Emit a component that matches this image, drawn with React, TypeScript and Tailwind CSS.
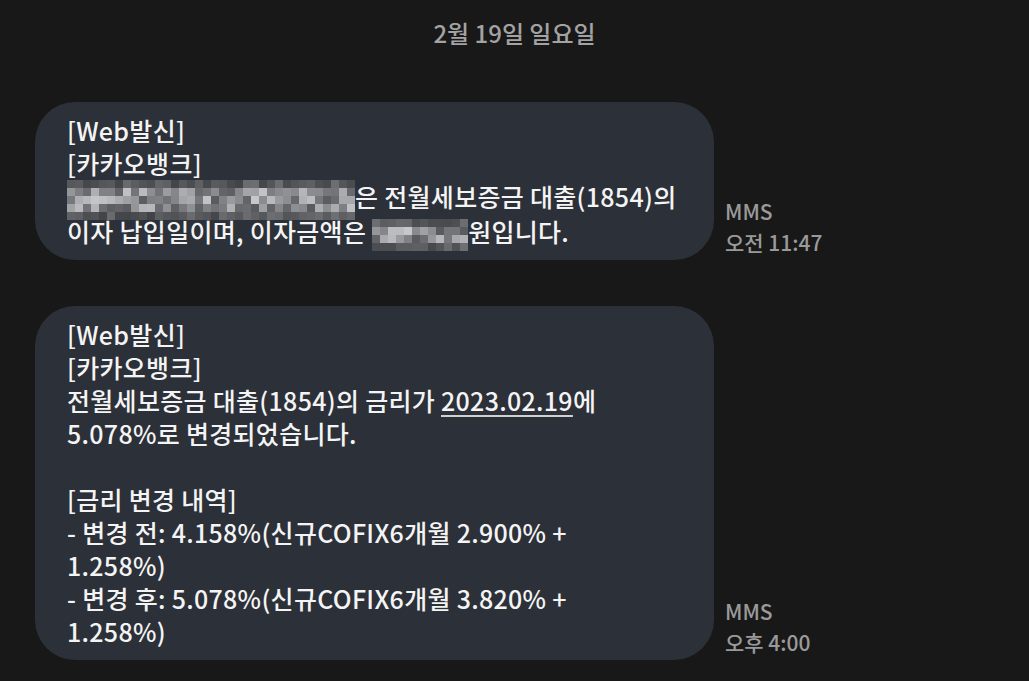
import type { ReactNode } from "react";

const FONT = "font-['Noto_Sans_CJK_KR','Noto_Sans',sans-serif]";

// deterministic pseudo random so the mosaic looks the same every run
const rand = (seed: number) => {
  let s = seed;
  return () => {
    s = (s * 9301 + 49297) % 233280;
    return s / 233280;
  };
};

const Mosaic = ({ cols, rows, seed, cell = 8 }: { cols: number; rows: number; seed: number; cell?: number }) => {
  const r = rand(seed);
  const cells: string[] = [];
  for (let y = 0; y < rows; y++) {
    for (let x = 0; x < cols; x++) {
      const edge = y === 0 || y === rows - 1;
      const base = edge ? 64 : 88;
      const v = Math.round(base + r() * (edge ? 45 : 110));
      cells.push(`rgb(${v},${v + 2},${v + 6})`);
    }
  }
  return (
    <span
      className="inline-grid align-middle -my-[5px]"
      style={{ gridTemplateColumns: `repeat(${cols}, ${cell}px)`, gridAutoRows: `${cell}px` }}
    >
      {cells.map((c, i) => (
        <span key={i} style={{ background: c }} />
      ))}
    </span>
  );
};

const Bubble = ({ children }: { children: ReactNode }) => (
  <div className="w-[679px] shrink-0 rounded-[40px] bg-[#2c3038] px-[32px] py-[12px] text-[25px] font-medium leading-[33px] tracking-[0.3px] text-[#f4f4f4] whitespace-nowrap">
    {children}
  </div>
);

const Meta = ({ time }: { time: string }) => (
  <div className="pb-[2px] text-[21px] font-medium leading-[31px] text-[#9a9a9a]">
    <div>MMS</div>
    <div>{time}</div>
  </div>
);

const App = () => {
  return (
    <div className={`min-h-[681px] w-full bg-[#181818] ${FONT}`}>
      <div className="pt-[16px] text-center text-[24px] font-medium leading-[34px] text-[#a3a3a3]">2월 19일 일요일</div>

      <div className="mt-[52px] flex items-end gap-[11px] pl-[35px]">
        <Bubble>
          [Web발신]
          <br />
          [카카오뱅크]
          <br />
          <Mosaic cols={36} rows={5} seed={7} />
          은 전월세보증금 대출(1854)의
          <br />
          이자 납입일이며, 이자금액은 <Mosaic cols={12} rows={4} seed={19} cell={8} />원입니다.
        </Bubble>
        <Meta time="오전 11:47" />
      </div>

      <div className="mt-[46px] flex items-end gap-[11px] pl-[35px]">
        <Bubble>
          [Web발신]
          <br />
          [카카오뱅크]
          <br />
          전월세보증금 대출(1854)의 금리가{" "}
          <span className="underline decoration-[#d0d0d0] decoration-2 underline-offset-[4px]">2023.02.19</span>에
          <br />
          5.078%로 변경되었습니다.
          <br />
          <br />
          [금리 변경 내역]
          <br />
          - 변경 전: 4.158%(신규COFIX6개월 2.900% +
          <br />
          1.258%)
          <br />
          - 변경 후: 5.078%(신규COFIX6개월 3.820% +
          <br />
          1.258%)
        </Bubble>
        <Meta time="오후 4:00" />
      </div>
    </div>
  );
};

export default App;
